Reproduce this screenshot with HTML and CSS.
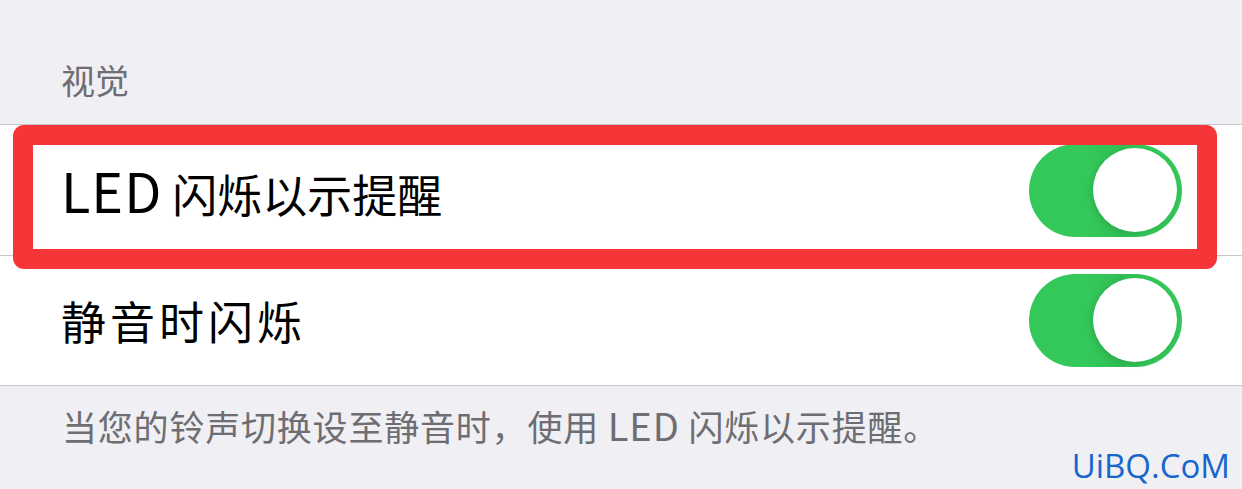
FILE: index.html
```html
<!DOCTYPE html>
<html lang="zh-CN">
<head>
<meta charset="utf-8">
<link rel="stylesheet" href="styles.css">
</head>
<body>
<div class="page">
  <div class="section-header">视觉</div>
  <div class="list">
    <div class="row">
      <span class="label"><span class="latin">LED</span> 闪烁以示提醒</span>
      <span class="toggle"><span class="knob"></span></span>
    </div>
    <div class="row">
      <span class="label label-wide">静音时闪烁</span>
      <span class="toggle"><span class="knob"></span></span>
    </div>
    <div class="highlight"></div>
  </div>
  <div class="footer">当您的铃声切换设至静音时，使用 <span class="latin-small">LED</span> 闪烁以示提醒。</div>
  <div class="watermark">UiBQ.CoM</div>
</div>
</body>
</html>
```

FILE: styles.css
```css
html, body {
  margin: 0;
  padding: 0;
}
body {
  background: #efeff4;
  font-family: "Noto Sans CJK SC", "Noto Sans", sans-serif;
  width: 1242px;
  height: 489px;
  overflow: hidden;
}
.page {
  position: relative;
  width: 1242px;
  height: 489px;
}
.section-header {
  height: 124px;
  box-sizing: border-box;
  padding: 56px 0 0 61px;
  font-size: 34px;
  line-height: 48px;
  color: #6d6d72;
}
.list {
  position: relative;
  background: #fff;
  border-top: 1px solid #c8c7cc;
  border-bottom: 1px solid #c8c7cc;
}
.row {
  height: 130px;
  display: flex;
  align-items: center;
  justify-content: space-between;
  padding: 0 60px 0 61px;
  box-sizing: border-box;
}
.row + .row {
  box-shadow: inset 0 1px 0 #c8c7cc;
}
.label {
  font-size: 45px;
  color: #000;
  line-height: 1;
}
.label-wide {
  letter-spacing: 4px;
}
.latin {
  font-size: 54px;
  letter-spacing: 1px;
}
.latin-small {
  font-size: 38px;
  letter-spacing: 1px;
}
.toggle {
  position: relative;
  width: 153px;
  height: 93px;
  border-radius: 47px;
  background: linear-gradient(90deg, #34c759 0%, #34c759 40%, #30bf55 60%, #34c759 80%);
  flex: none;
}
.knob {
  position: absolute;
  right: 5px;
  top: 4px;
  width: 84px;
  height: 84px;
  border-radius: 50%;
  background: #fff;
  box-shadow: -2px 2px 6px rgba(0, 0, 0, 0.12);
}
.highlight {
  position: absolute;
  left: 13px;
  top: 0;
  width: 1204px;
  height: 144px;
  box-sizing: border-box;
  border: 20px solid #f53538;
  border-radius: 11px;
}
.footer {
  padding: 14px 0 0 62px;
  font-size: 35px;
  line-height: 50px;
  letter-spacing: 0.8px;
  color: #6d6d72;
}
.watermark {
  position: absolute;
  right: 12px;
  bottom: 7px;
  font-family: "Open Sans", "Noto Sans", sans-serif;
  font-size: 33px;
  line-height: 1;
  color: #1666cc;
}
```
